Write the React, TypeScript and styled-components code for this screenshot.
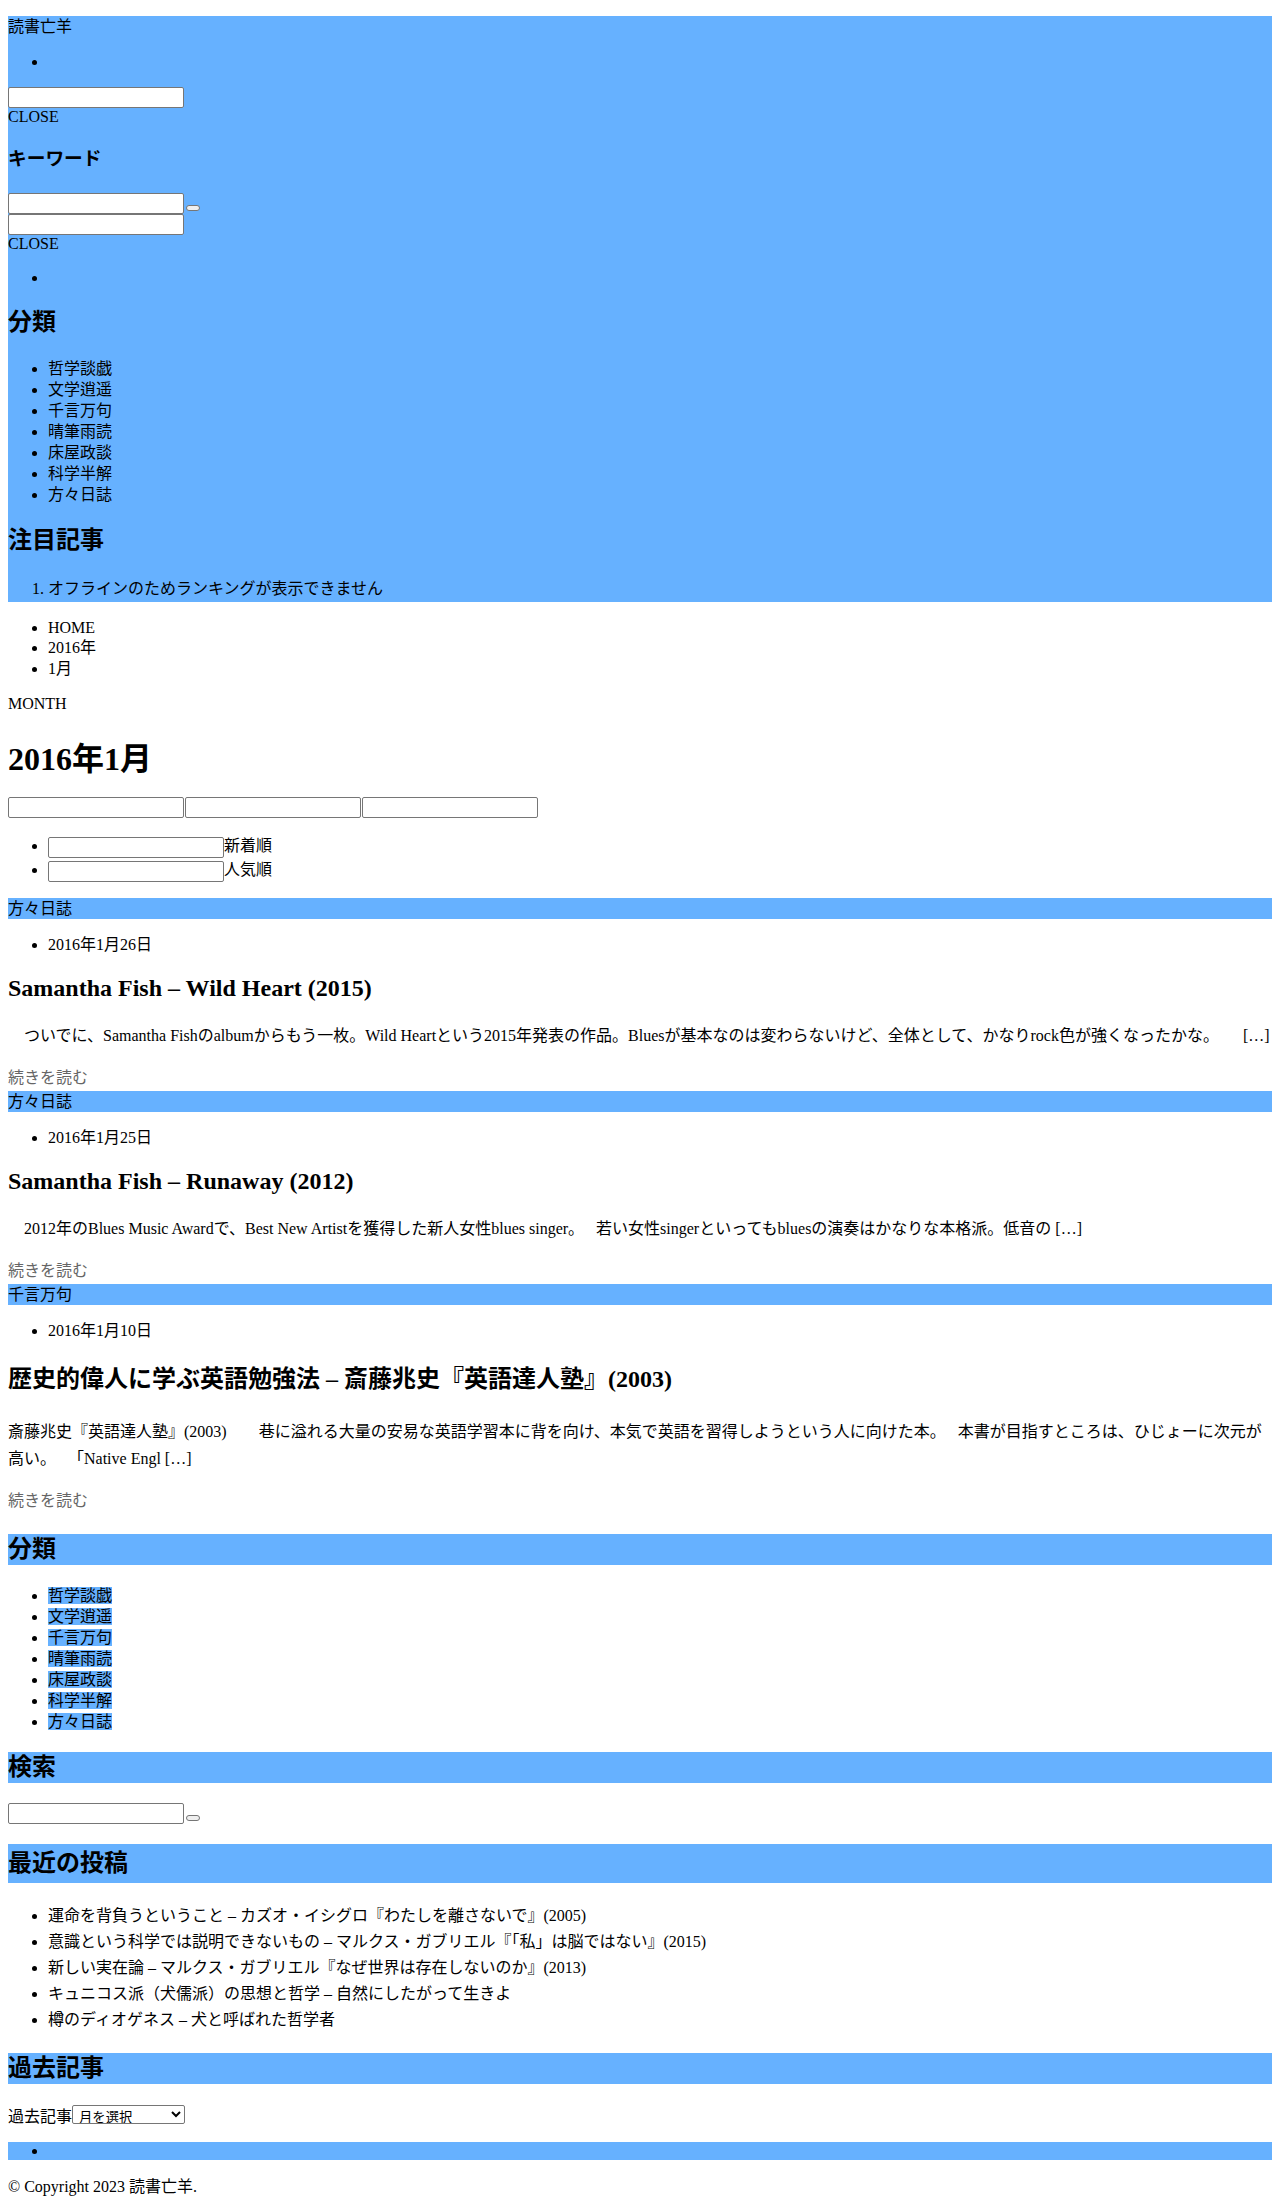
import React from "react";
import styled, { createGlobalStyle } from "styled-components";

const BLUE = "#66b1ff";

const GlobalStyle = createGlobalStyle`
  html, body { margin: 0; padding: 0; background: #fff; }
  body {
    font-family: "Liberation Serif", "Noto Sans CJK JP", serif;
    font-size: 16px;
    color: #000;
  }
  a { color: inherit; text-decoration: none; }
`;

const Page = styled.div`
  padding: 16px 8px 8px;
`;

const Header = styled.header`
  background: ${BLUE};
`;

const SiteTitle = styled.div`
  line-height: 21px;
`;

const List = styled.ul<{ $lh: number; $bg?: boolean }>`
  margin: 16px 0;
  padding-left: 40px;
  background: ${(p) => (p.$bg ? BLUE : "transparent")};
  li {
    line-height: ${(p) => p.$lh}px;
    min-height: ${(p) => p.$lh}px;
  }
`;

const TextInput = styled.input`
  display: block;
  box-sizing: border-box;
  width: 176px;
  height: 21px;
  margin: 0;
  padding: 1px 2px;
  border: 1px solid #767676;
  border-radius: 2px;
  background: #fff;
  font: 13.33px Arial, "Liberation Sans", sans-serif;
`;

const CloseText = styled.div`
  line-height: 18px;
`;

const KeywordTitle = styled.h3`
  margin: 19px 0 21px;
  font-size: 18.72px;
  line-height: 27px;
  font-weight: bold;
`;

const SearchRow = styled.form`
  display: flex;
  align-items: flex-end;
  margin: 0;
`;

const TinyButton = styled.button`
  box-sizing: border-box;
  width: 14px;
  height: 6px;
  padding: 0;
  margin: 0 0 3px 2px;
  border: 1px solid #767676;
  border-radius: 3px;
  background: #efefef;
`;

const SectionTitle = styled.h2`
  margin: 19.92px 0;
  font-size: 24px;
  font-weight: bold;
  line-height: 31px;
`;

const MonthLabel = styled.div`
  line-height: 18.4px;
`;

const PageTitle = styled.h1`
  margin: 19px 0 18.44px;
  font-size: 32px;
  font-weight: bold;
`;

const FilterRow = styled.div`
  display: flex;
  gap: 1px;
`;

const SortInput = styled(TextInput)`
  display: inline-block;
  vertical-align: middle;
`;

const CategoryBar = styled.div`
  background: ${BLUE};
  line-height: 21px;
`;

const ArticleTitle = styled.h2<{ $lh: number }>`
  margin: 19.92px 0;
  font-size: 24px;
  font-weight: bold;
  line-height: ${(p) => p.$lh}px;
`;

const Excerpt = styled.p`
  margin: 16px 0;
  line-height: 27px;
`;

const ReadMore = styled.a`
  display: block;
  color: #666;
  line-height: 26px;
`;

const WidgetTitle = styled.h2<{ $lh?: number }>`
  margin: 19.92px 0;
  font-size: 24px;
  font-weight: bold;
  background: ${BLUE};
  line-height: ${(p) => p.$lh ?? 31}px;
`;

const CatLink = styled.a`
  background: ${BLUE};
  color: #000;
`;

const ArchiveRow = styled.div`
  display: flex;
  align-items: center;
  height: 22px;
`;

const ArchiveSelect = styled.select`
  box-sizing: border-box;
  width: 113px;
  height: 19px;
  margin: 0;
  padding: 0 2px;
  border: 1px solid #767676;
  border-radius: 2px;
  background: #fff;
  color: #000;
  font: 13.33px "Noto Sans CJK JP", sans-serif;
`;

const Copyright = styled.div`
  line-height: 21px;
`;

const categories = ["哲学談戯", "文学逍遥", "千言万句", "晴筆雨読", "床屋政談", "科学半解", "方々日誌"];

const articles = [
  {
    cat: "方々日誌",
    date: "2016年1月26日",
    title: "Samantha Fish – Wild Heart (2015)",
    titleHeight: 27.6,
    excerpt:
      "　ついでに、Samantha Fishのalbumからもう一枚。Wild Heartという2015年発表の作品。Bluesが基本なのは変わらないけど、全体として、かなりrock色が強くなったかな。　　[…]",
  },
  {
    cat: "方々日誌",
    date: "2016年1月25日",
    title: "Samantha Fish – Runaway (2012)",
    titleHeight: 27.6,
    excerpt:
      "　2012年のBlues Music Awardで、Best New Artistを獲得した新人女性blues singer。　 若い女性singerといってもbluesの演奏はかなりな本格派。低音の […]",
  },
  {
    cat: "千言万句",
    date: "2016年1月10日",
    title: "歴史的偉人に学ぶ英語勉強法 – 斎藤兆史『英語達人塾』(2003)",
    titleHeight: 37,
    excerpt:
      "斎藤兆史『英語達人塾』(2003)　　巷に溢れる大量の安易な英語学習本に背を向け、本気で英語を習得しようという人に向けた本。　 本書が目指すところは、ひじょーに次元が高い。　 「Native Engl […]",
  },
];

const recent = [
  "運命を背負うということ – カズオ・イシグロ『わたしを離さないで』(2005)",
  "意識という科学では説明できないもの – マルクス・ガブリエル『「私」は脳ではない』(2015)",
  "新しい実在論 – マルクス・ガブリエル『なぜ世界は存在しないのか』(2013)",
  "キュニコス派（犬儒派）の思想と哲学 – 自然にしたがって生きよ",
  "樽のディオゲネス – 犬と呼ばれた哲学者",
];

export default function App() {
  return (
    <>
      <GlobalStyle />
      <Page>
        <Header>
          <SiteTitle>読書亡羊</SiteTitle>
          <List $lh={18}>
            <li></li>
          </List>
          <TextInput type="text" />
          <CloseText>CLOSE</CloseText>
          <KeywordTitle>キーワード</KeywordTitle>
          <SearchRow onSubmit={(e) => e.preventDefault()}>
            <TextInput type="text" />
            <TinyButton type="submit" />
          </SearchRow>
          <TextInput type="text" />
          <CloseText>CLOSE</CloseText>
          <List $lh={18}>
            <li></li>
          </List>
          <SectionTitle>分類</SectionTitle>
          <List $lh={21}>
            {categories.map((c) => (
              <li key={c}>
                <a href="#">{c}</a>
              </li>
            ))}
          </List>
          <SectionTitle>注目記事</SectionTitle>
          <List as="ol" $lh={26}>
            <li>オフラインのためランキングが表示できません</li>
          </List>
        </Header>

        <main>
          <List $lh={20.5}>
            <li>HOME</li>
            <li>2016年</li>
            <li>1月</li>
          </List>
          <MonthLabel>MONTH</MonthLabel>
          <PageTitle>2016年1月</PageTitle>
          <FilterRow>
            <TextInput type="text" />
            <TextInput type="text" />
            <TextInput type="text" />
          </FilterRow>
          <List $lh={23}>
            <li>
              <SortInput type="text" />
              新着順
            </li>
            <li>
              <SortInput type="text" />
              人気順
            </li>
          </List>

          {articles.map((a) => (
            <article key={a.title}>
              <CategoryBar>{a.cat}</CategoryBar>
              <List $lh={20}>
                <li>{a.date}</li>
              </List>
              <ArticleTitle $lh={a.titleHeight}>{a.title}</ArticleTitle>
              <Excerpt>{a.excerpt}</Excerpt>
              <ReadMore href="#">続きを読む</ReadMore>
            </article>
          ))}
        </main>

        <aside>
          <WidgetTitle>分類</WidgetTitle>
          <List $lh={21}>
            {categories.map((c) => (
              <li key={c}>
                <CatLink href="#">{c}</CatLink>
              </li>
            ))}
          </List>
          <WidgetTitle>検索</WidgetTitle>
          <SearchRow onSubmit={(e) => e.preventDefault()}>
            <TextInput type="text" />
            <TinyButton type="submit" />
          </SearchRow>
          <WidgetTitle $lh={39}>最近の投稿</WidgetTitle>
          <List $lh={26}>
            {recent.map((r) => (
              <li key={r}>
                <a href="#">{r}</a>
              </li>
            ))}
          </List>
          <WidgetTitle>過去記事</WidgetTitle>
          <ArchiveRow>
            過去記事
            <ArchiveSelect defaultValue="">
              <option value="">月を選択</option>
            </ArchiveSelect>
          </ArchiveRow>
        </aside>

        <footer>
          <List $lh={18} $bg>
            <li></li>
          </List>
          <Copyright>© Copyright 2023 読書亡羊.</Copyright>
        </footer>
      </Page>
    </>
  );
}
